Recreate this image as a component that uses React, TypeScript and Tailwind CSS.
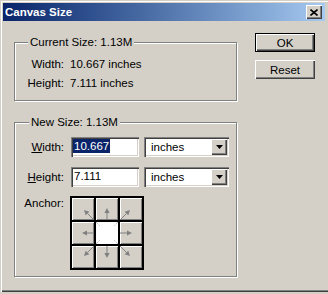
import React from 'react'

type Pt = [number, number]

// raised / sunken win2k bevels
const raised = 'shadow-[inset_1px_1px_0_#fff,inset_-1px_-1px_0_#404040,inset_-2px_-2px_0_#808080]'
const sunken =
  'shadow-[inset_1px_1px_0_#808080,inset_2px_2px_0_#404040,inset_-1px_-1px_0_#fff,inset_-2px_-2px_0_#d4d0c8]'
const etched = 'border border-[#808080] shadow-[inset_1px_1px_0_#fff,1px_1px_0_#fff]'

// anchor arrows, tail -> tip, in 22x22 cell coords
const arrows: ([Pt, Pt] | null)[] = [
  [[22, 22], [12, 12]],
  [[11, 22], [11, 10]],
  [[0, 22], [10, 12]],
  [[22, 11], [10, 11]],
  null,
  [[0, 11], [12, 11]],
  [[22, 0], [12, 10]],
  [[11, 0], [11, 12]],
  [[0, 0], [10, 10]],
]

function Arrow({ tail, tip }: { tail: Pt; tip: Pt }) {
  const dx = tip[0] - tail[0]
  const dy = tip[1] - tail[1]
  const len = Math.hypot(dx, dy)
  const ux = dx / len
  const uy = dy / len
  const bx = tip[0] - ux * 5
  const by = tip[1] - uy * 5
  const px = -uy * 2.6
  const py = ux * 2.6
  const head = `${tip[0]},${tip[1]} ${bx + px},${by + py} ${bx - px},${by - py}`
  return (
    <svg width="22" height="22" viewBox="0 0 22 22">
      <line x1={tail[0]} y1={tail[1]} x2={bx} y2={by} stroke="#808080" strokeWidth="1" />
      <polygon points={head} fill="#808080" />
    </svg>
  )
}

function AnchorGrid() {
  return (
    <div className="grid grid-cols-3 gap-[2px] bg-black p-[2px]">
      {arrows.map((a, i) =>
        a ? (
          <div key={i} className="w-[22px] h-[22px] bg-[#d4d0c8] shadow-[inset_1px_1px_0_#fff,inset_-1px_-1px_0_#808080]">
            <Arrow tail={a[0]} tip={a[1]} />
          </div>
        ) : (
          <div key={i} className="w-[22px] h-[22px] bg-white">
            <svg width="22" height="22" viewBox="0 0 22 22">
              <g stroke="#a0a0a0" strokeWidth="1" strokeDasharray="1 1">
                <line x1="0" y1="0" x2="4" y2="4" />
                <line x1="22" y1="0" x2="18" y2="4" />
                <line x1="0" y1="22" x2="4" y2="18" />
                <line x1="22" y1="22" x2="18" y2="18" />
              </g>
            </svg>
          </div>
        )
      )}
    </div>
  )
}

function UnitSelect() {
  return (
    <div className={`ml-[5px] w-[85px] h-[20px] bg-white flex items-center p-[2px] ${sunken}`}>
      <span className="flex-1 pl-[5px]">inches</span>
      <div className={`w-[16px] h-[16px] bg-[#d4d0c8] flex items-center justify-center ${raised}`}>
        <svg width="7" height="4" viewBox="0 0 7 4">
          <polygon points="0,0 7,0 3.5,4" fill="#000" />
        </svg>
      </div>
    </div>
  )
}

export default function App() {
  return (
    <div className="w-[328px] h-[294px] bg-[#d4d0c8] text-black text-[11.5px] leading-[14px] font-['Liberation_Sans',Arial,sans-serif]">
      <div className="h-[292px] p-[3px] flex flex-col shadow-[inset_1px_1px_0_#d4d0c8,inset_2px_2px_0_#fff,inset_0_-1px_0_#404040,inset_0_-2px_0_#808080]">
        {/* title bar */}
        <div className="h-[18px] flex items-center bg-gradient-to-r from-[#0a246a] to-[#a6caf0] pl-[2px] pr-[3px]">
          <span className="flex-1 text-white font-bold">Canvas Size</span>
          <div className={`w-[16px] h-[14px] bg-[#d4d0c8] flex items-center justify-center ${raised}`}>
            <svg width="8" height="7" viewBox="0 0 8 7">
              <g stroke="#000" strokeWidth="1.6">
                <line x1="0.5" y1="0.5" x2="7.5" y2="6.5" />
                <line x1="7.5" y1="0.5" x2="0.5" y2="6.5" />
              </g>
            </svg>
          </div>
        </div>

        {/* body */}
        <div className="flex pl-[11px]">
          <div className="pt-[14px]">
            <fieldset className={`w-[223px] h-[66px] ${etched}`}>
              <legend className="ml-[13px] px-[2px] bg-[#d4d0c8]">Current Size: 1.13M</legend>
              <div className="pt-[5px]">
                <div className="flex h-[19px] items-center">
                  <span className="w-[49px] text-right">Width:</span>
                  <span className="ml-[6px]">10.667 inches</span>
                </div>
                <div className="flex h-[19px] items-center">
                  <span className="w-[49px] text-right">Height:</span>
                  <span className="ml-[6px]">7.111 inches</span>
                </div>
              </div>
            </fieldset>

            <fieldset className={`mt-[14px] w-[223px] h-[162px] ${etched}`}>
              <legend className="ml-[14px] px-[2px] bg-[#d4d0c8]">New Size: 1.13M</legend>
              <div className="pt-[8px]">
                <div className="flex h-[20px] items-center">
                  <span className="w-[49px] text-right">
                    <span className="underline">W</span>idth:
                  </span>
                  <div className={`ml-[7px] w-[68px] h-[20px] bg-white p-[2px] ${sunken}`}>
                    <span className="inline-block px-[1px] bg-[#0a246a] text-white">10.667</span>
                  </div>
                  <UnitSelect />
                </div>
                <div className="flex h-[20px] items-center mt-[10px]">
                  <span className="w-[49px] text-right">
                    <span className="underline">H</span>eight:
                  </span>
                  <div className={`ml-[7px] w-[68px] h-[20px] bg-white p-[2px] ${sunken}`}>
                    <span className="inline-block px-[1px]">7.111</span>
                  </div>
                  <UnitSelect />
                </div>
                <div className="flex mt-[9px]">
                  <span className="w-[49px] text-right">Anchor:</span>
                  <div className="ml-[6px]">
                    <AnchorGrid />
                  </div>
                </div>
              </div>
            </fieldset>
          </div>

          {/* buttons */}
          <div className="ml-[18px] pt-[12px] flex flex-col gap-[8px]">
            <div className="w-[60px] h-[19px] border border-black">
              <button className={`w-full h-full bg-[#d4d0c8] flex items-center justify-center ${raised}`}>OK</button>
            </div>
            <button className={`w-[60px] h-[19px] bg-[#d4d0c8] flex items-center justify-center ${raised}`}>Reset</button>
          </div>
        </div>
      </div>
    </div>
  )
}
